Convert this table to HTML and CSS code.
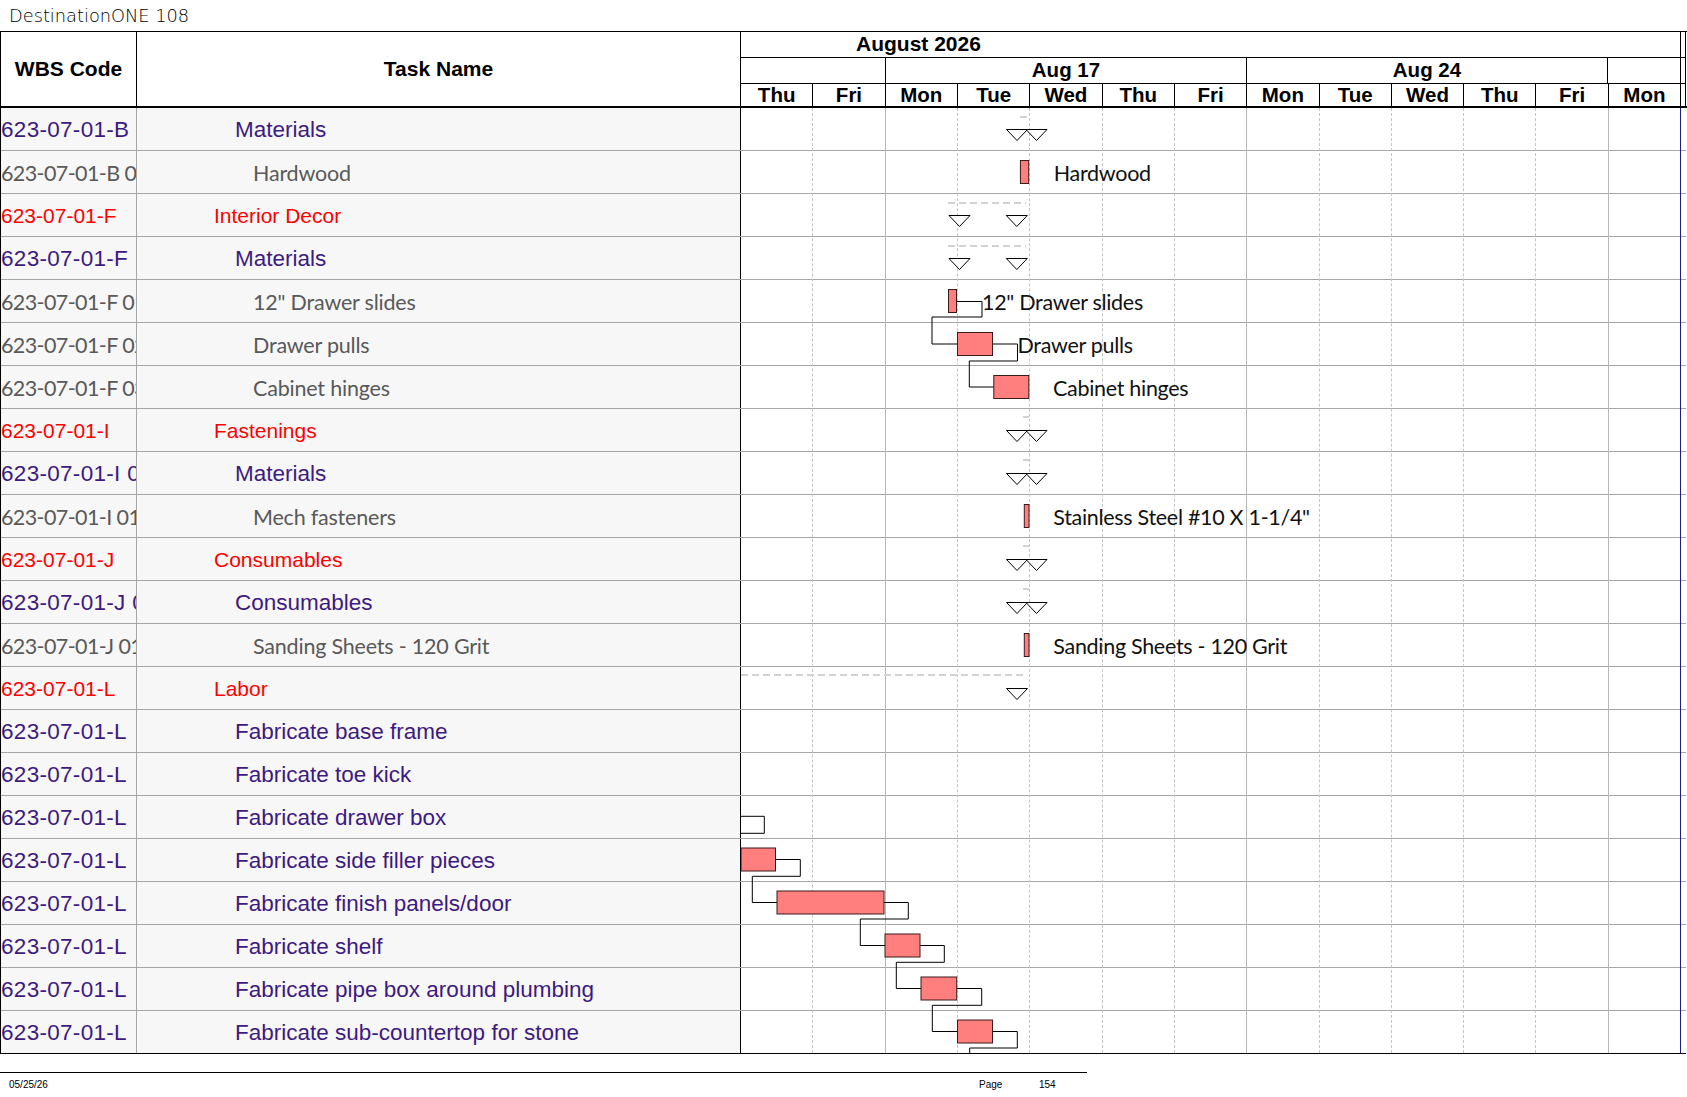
FILE: index.html
```html
<!DOCTYPE html>
<html>
<head>
<meta charset="utf-8">
<title>DestinationONE 108</title>
<link rel="stylesheet" href="styles.css">
</head>
<body>
<div class="title">DestinationONE 108</div>
<div class="sheet">
  <div class="head">
    <div class="hcell wbs-h">WBS Code</div>
    <div class="hcell task-h">Task Name</div>
    <div class="timescale">
      <div class="ts-row ts-month"><div class="month-label">August 2026</div></div>
      <div class="ts-row ts-weeks">
        <div class="wk w2"></div>
        <div class="wk w5">Aug 17</div>
        <div class="wk w5">Aug 24</div>
        <div class="wk w1"></div>
      </div>
      <div class="ts-row ts-days">
        <div class="day">Thu</div><div class="day">Fri</div><div class="day">Mon</div><div class="day">Tue</div><div class="day">Wed</div><div class="day">Thu</div><div class="day">Fri</div><div class="day">Mon</div><div class="day">Tue</div><div class="day">Wed</div><div class="day">Thu</div><div class="day">Fri</div><div class="day">Mon</div>
      </div>
    </div>
  </div>
  <div class="body">
    <div class="rows">
      <div class="row grp"><div class="wbs">623-07-01-B</div><div class="task l2">Materials</div></div>
      <div class="row leaf"><div class="wbs">623-07-01-B 01</div><div class="task l3">Hardwood</div></div>
      <div class="row sum"><div class="wbs">623-07-01-F</div><div class="task l1">Interior Decor</div></div>
      <div class="row grp"><div class="wbs">623-07-01-F</div><div class="task l2">Materials</div></div>
      <div class="row leaf"><div class="wbs">623-07-01-F 01</div><div class="task l3">12" Drawer slides</div></div>
      <div class="row leaf"><div class="wbs">623-07-01-F 02</div><div class="task l3">Drawer pulls</div></div>
      <div class="row leaf"><div class="wbs">623-07-01-F 03</div><div class="task l3">Cabinet hinges</div></div>
      <div class="row sum"><div class="wbs">623-07-01-I</div><div class="task l1">Fastenings</div></div>
      <div class="row grp"><div class="wbs">623-07-01-I 01</div><div class="task l2">Materials</div></div>
      <div class="row leaf"><div class="wbs">623-07-01-I 01 01</div><div class="task l3">Mech fasteners</div></div>
      <div class="row sum"><div class="wbs">623-07-01-J</div><div class="task l1">Consumables</div></div>
      <div class="row grp"><div class="wbs">623-07-01-J 01</div><div class="task l2">Consumables</div></div>
      <div class="row leaf"><div class="wbs">623-07-01-J 01 01</div><div class="task l3">Sanding Sheets - 120 Grit</div></div>
      <div class="row sum"><div class="wbs">623-07-01-L</div><div class="task l1">Labor</div></div>
      <div class="row grp"><div class="wbs">623-07-01-L</div><div class="task l2">Fabricate base frame</div></div>
      <div class="row grp"><div class="wbs">623-07-01-L</div><div class="task l2">Fabricate toe kick</div></div>
      <div class="row grp"><div class="wbs">623-07-01-L</div><div class="task l2">Fabricate drawer box</div></div>
      <div class="row grp"><div class="wbs">623-07-01-L</div><div class="task l2">Fabricate side filler pieces</div></div>
      <div class="row grp"><div class="wbs">623-07-01-L</div><div class="task l2">Fabricate finish panels/door</div></div>
      <div class="row grp"><div class="wbs">623-07-01-L</div><div class="task l2">Fabricate shelf</div></div>
      <div class="row grp"><div class="wbs">623-07-01-L</div><div class="task l2">Fabricate pipe box around plumbing</div></div>
      <div class="row grp"><div class="wbs">623-07-01-L</div><div class="task l2">Fabricate sub-countertop for stone</div></div>
    </div>
    <div class="chart">
      <div class="cols">
        <div class="col"></div><div class="col wk-end"></div>
        <div class="col"></div><div class="col"></div><div class="col"></div><div class="col"></div><div class="col wk-end"></div>
        <div class="col"></div><div class="col"></div><div class="col"></div><div class="col"></div><div class="col wk-end"></div>
        <div class="col last"></div>
      </div>
      <svg class="overlay" width="940" height="945" viewBox="0 0 940 945">
        <g class="sumline">
          <line x1="279" y1="9" x2="287" y2="9"/>
          <line x1="207" y1="95" x2="285" y2="95"/>
          <line x1="207" y1="138" x2="285" y2="138"/>
          <line x1="282" y1="309" x2="288" y2="309"/>
          <line x1="282" y1="352" x2="288" y2="352"/>
          <line x1="282" y1="438" x2="288" y2="438"/>
          <line x1="282" y1="481" x2="288" y2="481"/>
          <line x1="0" y1="567" x2="286" y2="567"/>
        </g>
        <g class="tri">
          <polygon points="265.5,21.5 286.5,21.5 276,32.5"/>
          <polygon points="285,21.5 306,21.5 295.5,32.5"/>
          <polygon points="208,107.5 229,107.5 218.5,118.5"/>
          <polygon points="265.3,107.5 286.3,107.5 275.8,118.5"/>
          <polygon points="208,150.5 229,150.5 218.5,161.5"/>
          <polygon points="265.3,150.5 286.3,150.5 275.8,161.5"/>
          <polygon points="265.5,322.5 286.5,322.5 276,333.5"/>
          <polygon points="285,322.5 306,322.5 295.5,333.5"/>
          <polygon points="265.5,365.5 286.5,365.5 276,376.5"/>
          <polygon points="285,365.5 306,365.5 295.5,376.5"/>
          <polygon points="265.5,451.5 286.5,451.5 276,462.5"/>
          <polygon points="285,451.5 306,451.5 295.5,462.5"/>
          <polygon points="265.5,494.5 286.5,494.5 276,505.5"/>
          <polygon points="285,494.5 306,494.5 295.5,505.5"/>
          <polygon points="265.5,580.5 286.5,580.5 276,591.5"/>
        </g>
        <g class="link">
          <path d="M215.3,193.5 H241 V209 H191 V236 H216.5"/>
          <path d="M251.5,236 H276.5 V253 H228.3 V279 H252.8"/>
          <path d="M0,708.3 H23.3 V725.3 H0"/>
          <path d="M34.5,751.5 H59.3 V768.3 H11.3 V794.5 H36"/>
          <path d="M143,794.5 H167.3 V811 H119.3 V837.5 H144"/>
          <path d="M179,837.5 H203.3 V854.3 H155.3 V880.5 H180"/>
          <path d="M215.7,880.5 H240.7 V897.3 H191.3 V923.5 H216.5"/>
          <path d="M251.5,923.5 H276.3 V940 H228.7 V946"/>
        </g>
        <g class="bar">
          <rect x="279.4" y="52.5" width="8.3" height="23"/>
          <rect x="207.5" y="181.5" width="8" height="23"/>
          <rect x="216.5" y="224.5" width="35" height="23"/>
          <rect x="252.8" y="267.5" width="35" height="23"/>
          <rect x="283.3" y="396.5" width="4.7" height="23"/>
          <rect x="283.3" y="525.5" width="4.7" height="23"/>
          <rect x="0" y="740" width="34.5" height="23"/>
          <rect x="36" y="783" width="107" height="23"/>
          <rect x="144" y="826" width="35" height="23"/>
          <rect x="180" y="869" width="35.7" height="23"/>
          <rect x="216.5" y="912" width="35" height="23"/>
        </g>
        <g class="lbl">
          <text x="312.8" y="72.5">Hardwood</text>
          <text x="241" y="201.5">12" Drawer slides</text>
          <text x="276.5" y="244.5">Drawer pulls</text>
          <text x="312" y="287.5">Cabinet hinges</text>
          <text x="312.3" y="416.5">Stainless Steel #10 X 1-1/4"</text>
          <text x="312.3" y="545.5">Sanding Sheets - 120 Grit</text>
        </g>
      </svg>
    </div>
  </div>
</div>
<div class="footer">
  <span class="fdate">05/25/26</span>
  <span class="fpage">Page</span>
  <span class="fnum">154</span>
</div>
</body>
</html>
```

FILE: styles.css
```css
* { box-sizing: border-box; }

body {
  margin: 0;
  width: 1687px;
  background: #fff;
  color: #000;
}

.title {
  height: 31px;
  padding: 6px 0 0 9px;
  font: 200 17.8px "DejaVu Sans", sans-serif;
  line-height: 20px;
  color: #000;
}

/* ---------- header ---------- */
.head {
  display: flex;
  height: 77px;
  border-top: 1px solid #000;
  border-bottom: 2px solid #000;
}

.hcell {
  display: flex;
  align-items: center;
  justify-content: center;
  font: bold 21px "Liberation Sans", Arial, sans-serif;
}

.wbs-h {
  width: 137px;
  border-left: 1px solid #000;
  border-right: 1px solid #000;
}

.task-h {
  width: 604px;
  border-right: 1px solid #000;
}

.timescale {
  width: 945px;
  display: flex;
  flex-direction: column;
  border-right: 1px solid #000;
  font: bold 20.5px "Liberation Sans", Arial, sans-serif;
}

.ts-row {
  display: flex;
  padding-right: 4px;
}

.ts-month {
  height: 26px;
  border-bottom: 1px solid #000;
}

.month-label {
  width: 940px;
  border-right: 1px solid #000;
  padding-left: 115px;
  line-height: 24px;
  font-size: 21px;
}

.ts-weeks {
  height: 26px;
  border-bottom: 1px solid #000;
  width: 944px;
}

.ts-weeks .wk {
  border-right: 1px solid #000;
  text-align: center;
  line-height: 24px;
  flex-basis: 0;
}

.w1 { flex-grow: 1; }
.w2 { flex-grow: 2; }
.w5 { flex-grow: 5; }

.ts-days {
  flex: 1;
  width: 944px;
}

.day {
  flex: 1 1 0;
  border-right: 1px solid #000;
  text-align: center;
  line-height: 22px;
}

/* ---------- body ---------- */
.body {
  display: flex;
}

.rows {
  width: 741px;
  border-left: 1px solid #000;
}

.row {
  display: flex;
  height: 43px;
  border-bottom: 1px solid #a6a6a6;
}

.row:last-child {
  border-bottom-color: #000;
}

.wbs,
.task {
  display: flex;
  align-items: center;
  white-space: nowrap;
  overflow: hidden;
  background: #f7f7f7;
  padding-top: 2px;
}

.wbs {
  width: 136px;
  border-right: 1px solid #a6a6a6;
}

.task {
  width: 604px;
  border-right: 1px solid #000;
}

.l1 { padding-left: 77px; }
.l2 { padding-left: 98px; }
.l3 { padding-left: 116px; }

.row.sum {
  color: #ff0000;
  font: 21px "Liberation Sans", Arial, sans-serif;
}

.row.grp {
  color: #3d1a80;
  font: 22.5px "Liberation Sans", Arial, sans-serif;
}

.row.grp .wbs {
  letter-spacing: 0.3px;
}

.row.leaf {
  color: #595959;
  font: 21.5px Lato, "Open Sans", sans-serif;
  letter-spacing: -0.2px;
}

.row.leaf .wbs {
  letter-spacing: -0.6px;
}

/* ---------- chart ---------- */
.chart {
  position: relative;
  width: 945px;
  height: 946px;
  border-bottom: 1px solid #000;
  background: repeating-linear-gradient(to bottom, transparent 0, transparent 42px, #a6a6a6 42px, #a6a6a6 43px);
}

.cols {
  display: flex;
  width: 940px;
  height: 100%;
}

.col {
  flex: 1 1 0;
  border-right: 1px dashed #c4c4c4;
}

.col.wk-end {
  border-right: 1px solid #b8b8b8;
}

.col.last {
  border-right: 1px solid #1b1b96;
}

.overlay {
  position: absolute;
  left: 0;
  top: 0;
  overflow: hidden;
}

.sumline line {
  stroke: #d2d2d2;
  stroke-width: 2;
  stroke-dasharray: 7 4;
}

.tri polygon {
  fill: #fff;
  stroke: #000;
  stroke-width: 1;
}

.link path {
  fill: none;
  stroke: #000;
  stroke-width: 1;
}

.bar rect {
  fill: #ff7f7f;
  stroke: #3a1a1a;
  stroke-width: 1;
}

.lbl text {
  font: 21.5px Lato, "Open Sans", sans-serif;
  letter-spacing: -0.3px;
  fill: #111;
}

/* ---------- footer ---------- */
.footer {
  width: 1087px;
  margin-top: 18px;
  border-top: 1px solid #000;
  display: flex;
  padding-top: 6px;
  font: 10px "Liberation Sans Narrow", "Liberation Sans", Arial, sans-serif;
  line-height: 12px;
  color: #000;
}

.fdate {
  width: 979px;
  padding-left: 9px;
}

.fpage {
  width: 60px;
}
```
